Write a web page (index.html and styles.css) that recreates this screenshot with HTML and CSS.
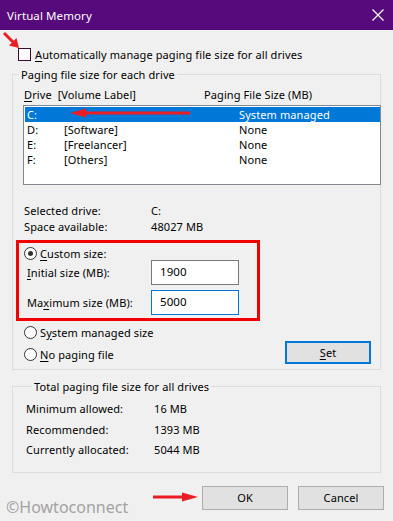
FILE: index.html
```html
<!DOCTYPE html>
<html lang="en">
<head>
  <meta charset="UTF-8" />
  <meta name="viewport" content="width=device-width, initial-scale=1.0" />
  <title>Virtual Memory</title>
  <link rel="stylesheet" href="styles.css">
</head>
<body>
  <div class="dialog">
    <div class="titlebar">
      <span class="title">Virtual Memory</span>
      <svg class="close" width="12" height="12" viewBox="0 0 12 12">
        <path d="M0.5 0.5 L11.5 11.5 M11.5 0.5 L0.5 11.5" stroke="#fff" stroke-width="1.2" />
      </svg>
    </div>

    <div class="check-row">
      <span class="checkbox"></span>
      <span><u>A</u>utomatically manage paging file size for all drives</span>
    </div>

    <fieldset class="group drives">
      <legend>Paging file size for each drive</legend>
      <div class="list-head">
        <span class="col-a"><u>D</u>rive&nbsp; [Volume Label]</span>
        <span>Paging File Size (MB)</span>
      </div>
      <div class="listbox">
        <div class="row selected"><span class="c1">C:</span><span class="c2"></span><span>System managed</span></div>
        <div class="row"><span class="c1">D:</span><span class="c2">[Software]</span><span>None</span></div>
        <div class="row"><span class="c1">E:</span><span class="c2">[Freelancer]</span><span>None</span></div>
        <div class="row"><span class="c1">F:</span><span class="c2">[Others]</span><span>None</span></div>
      </div>

      <div class="info">
        <div class="info-row"><span class="info-label">Selected drive:</span><span>C:</span></div>
        <div class="info-row"><span class="info-label">Space available:</span><span>48027 MB</span></div>
      </div>

      <div class="highlight">
        <div class="radio-row first"><span class="radio checked"></span><span><u>C</u>ustom size:</span></div>
        <div class="size-row"><span class="size-label"><u>I</u>nitial size (MB):</span><span class="input">1900</span></div>
        <div class="size-row"><span class="size-label">Ma<u>x</u>imum size (MB):</span><span class="input focused">5000</span></div>
      </div>

      <div class="options">
        <div class="radios">
          <div class="radio-row"><span class="radio"></span><span>S<u>y</u>stem managed size</span></div>
          <div class="radio-row"><span class="radio"></span><span><u>N</u>o paging file</span></div>
        </div>
        <button class="btn set"><u>S</u>et</button>
      </div>
    </fieldset>

    <fieldset class="group totals">
      <legend>Total paging file size for all drives</legend>
      <div class="total-row"><span class="total-label">Minimum allowed:</span><span>16 MB</span></div>
      <div class="total-row"><span class="total-label">Recommended:</span><span>1393 MB</span></div>
      <div class="total-row"><span class="total-label">Currently allocated:</span><span>5044 MB</span></div>
    </fieldset>

    <div class="actions">
      <button class="btn">OK</button>
      <button class="btn">Cancel</button>
    </div>

    <div class="watermark">&copy;Howtoconnect</div>

    <!-- red annotation arrows -->
    <svg class="arrows" width="393" height="521" viewBox="0 0 393 521">
      <g fill="#ec1c24" stroke="#ec1c24">
        <line x1="4" y1="33" x2="13" y2="42" stroke-width="3" />
        <polygon points="19,48 16.5,38 9,45.5" stroke="none" />
        <line x1="84" y1="113" x2="190" y2="113" stroke-width="3" />
        <polygon points="70,113 86,108.5 86,117.5" stroke="none" />
        <line x1="153" y1="497" x2="184" y2="497" stroke-width="3" />
        <polygon points="198,497 182,492.5 182,501.5" stroke="none" />
      </g>
    </svg>
  </div>
</body>
</html>
```

FILE: styles.css
```css
* {
  box-sizing: border-box;
}

body {
  margin: 0;
  background: #f0f0f0;
  font-family: "Noto Sans", "Open Sans", sans-serif;
  font-size: 11px;
  letter-spacing: 0.1px;
  color: #000;
}

.dialog {
  position: relative;
  width: 393px;
  height: 521px;
  overflow: hidden;
}

.titlebar {
  height: 30px;
  background: #560a7b;
  color: #fff;
  display: flex;
  align-items: center;
  padding: 0 9px 0 7px;
  font-size: 11.5px;
}

.title {
  flex: 1;
}

.close {
  display: block;
}

u {
  text-decoration-thickness: 1px;
  text-underline-offset: 2px;
}

.check-row {
  display: flex;
  align-items: center;
  gap: 4px;
  height: 15px;
  margin: 17px 0 0 18px;
}

.checkbox {
  width: 13px;
  height: 13px;
  border: 1px solid #3d0a34;
  background: #fff;
}

.group {
  margin: 5px 0 0 12px;
  width: 369px;
  padding: 0;
  border: 1px solid #dcdcdc;
  min-inline-size: 0;
}

.group legend {
  margin-left: 6px;
  padding: 0 2px;
  line-height: 15px;
}

.list-head {
  display: flex;
  line-height: 15px;
  margin: 5px 0 3px 11px;
}

.col-a {
  width: 180px;
}

.listbox {
  margin-left: 10px;
  width: 358px;
  height: 80px;
  background: #fff;
  border: 1px solid #828790;
  padding: 1px 0 0 1px;
}

.row {
  display: flex;
  height: 15px;
  line-height: 15px;
  padding-left: 2px;
}

.row.selected {
  background: #0078d7;
  color: #fff;
}

.c1 {
  width: 37px;
}

.c2 {
  width: 175px;
}

.info {
  margin: 18px 0 0 11px;
}

.info-row {
  display: flex;
  line-height: 16px;
}

.info-label {
  width: 127px;
}

.highlight {
  margin: 5px 0 0 3px;
  width: 244px;
  height: 81px;
  border: 3px solid #f20000;
  padding: 3px 0 0 5px;
}

.radio-row {
  display: flex;
  align-items: center;
  gap: 3px;
  height: 14px;
}

.radio {
  width: 13px;
  height: 13px;
  border: 1px solid #333;
  border-radius: 50%;
  background: #fff;
  display: flex;
  align-items: center;
  justify-content: center;
}

.radio.checked::after {
  content: '';
  width: 5px;
  height: 5px;
  border-radius: 50%;
  background: #333;
}

.size-row {
  display: flex;
  align-items: center;
  height: 25px;
  padding-left: 3px;
  margin-bottom: 5px;
}

.size-label {
  width: 124px;
}

.input {
  width: 88px;
  height: 25px;
  border: 1px solid #7a7a7a;
  background: #fff;
  padding-left: 8px;
  line-height: 21px;
  font-size: 11.5px;
}

.input.focused {
  border-color: #0078d7;
}

.options {
  display: flex;
  justify-content: space-between;
  padding: 4px 9px 8px 11px;
}

.radios {
  display: flex;
  flex-direction: column;
  gap: 8px;
}

.btn {
  width: 86px;
  height: 23px;
  background: #e1e1e1;
  border: 1px solid #adadad;
  font: inherit;
  letter-spacing: inherit;
  color: #000;
  padding: 0;
}

.set {
  align-self: flex-end;
  margin-bottom: -3px;
  border: 2px solid #0078d7;
}

.totals {
  margin-top: 9px;
  padding: 5px 0 11px 13px;
}

.total-row {
  display: flex;
  line-height: 20.5px;
}

.total-label {
  width: 128px;
}

.actions {
  display: flex;
  justify-content: flex-end;
  gap: 10px;
  margin: 13px 9px 0 0;
}

.actions .btn {
  height: 24px;
}

.watermark {
  position: absolute;
  left: 6px;
  top: 496px;
  font-size: 16px;
  letter-spacing: 0;
  color: #a3a3a3;
}

.arrows {
  position: absolute;
  left: 0;
  top: 0;
  pointer-events: none;
}
```
